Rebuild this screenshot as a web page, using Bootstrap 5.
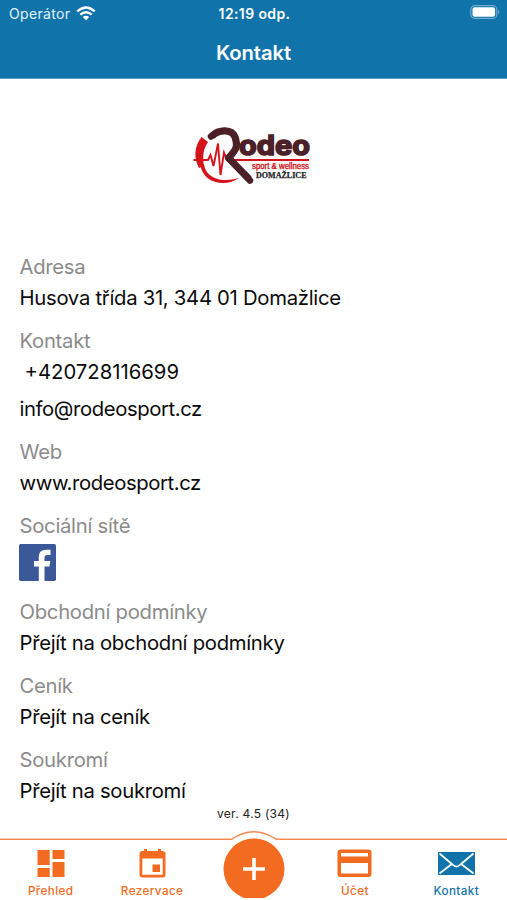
<!DOCTYPE html>
<html lang="cs">
<head>
<meta charset="utf-8">
<meta name="viewport" content="width=device-width, initial-scale=1">
<title>Kontakt</title>
<link href="https://cdn.jsdelivr.net/npm/bootstrap@5.3.0/dist/css/bootstrap.min.css" rel="stylesheet">
<style>
  :root { --blue: #1074ab; --orange: #f26b21; }
  body { font-family: Inter, "Noto Sans", sans-serif; color: #0b0b0b; background: #fff; }
  .screen { height: 900px; }
  .topbar { height: 79px; background: var(--blue); border-bottom: 1px solid #5ba0c7; }
  .status { height: 28px; padding: 0 7px 0 9px; font-size: 14px; line-height: 28px; }
  .status > div { flex: 1 1 0; }
  .carrier { color: #e3f0f8; letter-spacing: .35px; }
  .carrier svg { margin-left: 2px; margin-bottom: 2px; }
  .clock { font-weight: 600; letter-spacing: .38px; }
  .title { font-size: 20.3px; line-height: 50px; font-weight: 600; letter-spacing: -.12px; }
  .brand { height: 171.5px; padding-top: 45px; }
  .info { padding-left: 19.5px; font-size: 20.3px; line-height: 31px; letter-spacing: -.29px; }
  .info dt { font-weight: 400; color: #8b8b8b; }
  .info dd { margin: 0 0 12px; }
  .info dd.phone { margin-bottom: 6px; padding-left: 5px; letter-spacing: 0; }
  .info dd.mail { letter-spacing: -.4px; }
  .info dd.social { height: 43px; padding-top: 3px; line-height: 0; margin-left: -.5px; }
  .version { font-size: 12px; line-height: 16px; letter-spacing: .28px; height: 24px; margin-top: -11.5px; color: #222; }
  .tabs { height: 70px; }
  .tabs .ridge { left: 0; top: 0; }
  .tab { flex: 1 1 0; color: var(--orange); font-size: 11.7px; line-height: 14px; font-weight: 500; letter-spacing: .4px; padding-top: 15px; position: relative; }
  .tab svg { margin-bottom: 5px; }
  .tab.current { color: var(--blue); }
  .tab.plus { padding-top: 8px; }
</style>
</head>
<body>
<div class="screen d-flex flex-column overflow-hidden">
  <header class="topbar text-white flex-shrink-0">
    <div class="status d-flex">
      <div class="carrier d-flex align-items-center gap-1">Operátor
        <svg width="20" height="15" viewBox="0 0 20 15" fill="none" stroke="#fff" stroke-width="2.3"><path d="M1.2 5.4Q10-2.4 18.8 5.4M4.3 8.7Q10 3.7 15.7 8.7"/><path d="M6.8 11Q10 8.3 13.2 11L10 14.2Z" fill="#fff" stroke="none"/></svg>
      </div>
      <div class="clock text-center">12:19 odp.</div>
      <div class="d-flex align-items-center justify-content-end">
        <svg class="mb-1" width="30" height="14" viewBox="0 0 30 14"><rect x=".8" y=".7" width="26" height="12.6" rx="3.8" fill="none" stroke="#6eabd0" stroke-width="1.2"/><rect x="2.5" y="2.3" width="22.6" height="9.4" rx="2.2" fill="#fff"/><path d="M28.2 4.8q2.6 2.2 0 4.4z" fill="#6eabd0"/></svg>
      </div>
    </div>
    <h1 class="title text-center m-0">Kontakt</h1>
  </header>

  <main class="flex-grow-1">
    <div class="brand d-flex justify-content-center">
      <svg width="124" height="64" viewBox="0 0 124 64">
        <path d="M8 40C10 53 20 59 31 59Q40 59 47 54Q39 56.500 31 56C20 55 13 49 12 40Z" fill="#d6131b"/>
        <path d="M9.500 13L16 18C12 24 10 31 12 42L7 44C1 33 3 21 9.500 13Z" fill="#d6131b"/>
        <path d="M1.500 36H16L18.500 31L21.500 42L26 19.500L28.500 51L32 28.500L35 36H117" fill="none" stroke="#d6131b" stroke-width="1.900"/>
        <path d="M20 12C27 5 40 5 43 13C46 22 45 25 36.500 34L57 55" fill="none" stroke="#4b2027" stroke-width="7.200" stroke-linejoin="round"/>
        <path d="M19 12.500L20.500 11.500M53 51L58 56.500" stroke="#4b2027" stroke-width="6.500" stroke-linecap="round"/>
        <text x="47" y="30.500" textLength="71" lengthAdjust="spacingAndGlyphs" font-family="Inter, sans-serif" font-weight="700" font-size="26.500" fill="#4b2027" stroke="#4b2027" stroke-width="1.600">odeo</text>
        <text x="60" y="44.700" textLength="57" lengthAdjust="spacingAndGlyphs" font-family="Liberation Sans, sans-serif" font-size="8.500" fill="#d6131b" stroke="#d6131b" stroke-width=".35">sport &amp; wellness</text>
        <text x="64" y="53.500" textLength="50.500" lengthAdjust="spacingAndGlyphs" font-family="Liberation Serif, serif" font-weight="700" font-size="7.800" fill="#222" stroke="#222" stroke-width=".25">DOMAŽLICE</text>
      </svg>
    </div>

    <dl class="info mb-0">
      <dt>Adresa</dt>
      <dd>Husova třída 31, 344 01 Domažlice</dd>
      <dt>Kontakt</dt>
      <dd class="phone">+420728116699</dd>
      <dd class="mail">info@rodeosport.cz</dd>
      <dt>Web</dt>
      <dd class="mail">www.rodeosport.cz</dd>
      <dt>Sociální sítě</dt>
      <dd class="social"><svg width="37" height="37" viewBox="0 0 37 37"><rect width="37" height="37" rx="1.800" fill="#3b5998"/><path d="M19.800 37V22.500H15V17H19.800V13Q19.800 5.800 27 5.800H31.500V11H28.500Q25.500 11 25.500 14V17H31.300L30.500 22.500H25.500V37Z" fill="#fff"/></svg></dd>
      <dt>Obchodní podmínky</dt>
      <dd>Přejít na obchodní podmínky</dd>
      <dt>Ceník</dt>
      <dd>Přejít na ceník</dd>
      <dt>Soukromí</dt>
      <dd>Přejít na soukromí</dd>
    </dl>
    <div class="version text-center">ver. 4.5 (34)</div>
  </main>

  <nav class="tabs d-flex text-center position-relative flex-shrink-0">
    <svg class="ridge position-absolute" width="507" height="14" viewBox="0 0 507 14"><path d="M0 9.300H231.500Q253.500-6 276.500 9.300H507" fill="none" stroke="#f58a52" stroke-width="1.500"/></svg>
    <div class="tab d-flex flex-column align-items-center">
      <svg width="28" height="34" viewBox="0 0 28 34" fill="currentColor"><path d="M.5 5H12.700V20H.5ZM15.500 5H27.500V14H15.500ZM.5 23H12.700V32H.5ZM15.500 17H27.500V32H15.500Z"/></svg>
      Přehled
    </div>
    <div class="tab d-flex flex-column align-items-center">
      <svg width="27" height="34" viewBox="0 0 27 34"><path fill="currentColor" fill-rule="evenodd" d="M5 4H8V6H19V4H22V6H23.500Q26.500 6 26.500 9V29.500Q26.500 32.500 23.500 32.500H3.500Q.5 32.500 .5 29.500V9Q.5 6 3.500 6H5ZM3.300 13.500V29.800H23.700V13.500ZM13.500 19.500H21V27H13.500Z"/></svg>
      Rezervace
    </div>
    <div class="tab plus">
      <svg width="62" height="60" viewBox="0 0 62 60"><circle cx="31" cy="31" r="30.500" fill="currentColor"/><path d="M20 31H42M31 20V42" stroke="#fff" stroke-width="3.600"/></svg>
    </div>
    <div class="tab d-flex flex-column align-items-center">
      <svg width="35" height="34" viewBox="0 0 35 34"><path fill="currentColor" fill-rule="evenodd" d="M3.500 4.500H31.500Q34.500 4.500 34.500 7.500V29Q34.500 32 31.500 32H3.500Q.5 32 .5 29V7.500Q.5 4.500 3.500 4.500ZM4 8V11.500H31V8ZM4 18V28.500H31V18Z"/></svg>
      Účet
    </div>
    <div class="tab current d-flex flex-column align-items-center">
      <svg width="37" height="34" viewBox="0 0 37 34"><rect y="7" width="37" height="23" fill="currentColor"/><path d="M1.500 8.500L14.500 19.500Q18.500 23.500 22.500 19.500L35.500 8.500M1.500 28.500L14.500 18.500M35.500 28.500L22.500 18.500" fill="none" stroke="#fff" stroke-width="1.700"/></svg>
      Kontakt
    </div>
  </nav>
</div>
<script src="https://cdn.jsdelivr.net/npm/bootstrap@5.3.0/dist/js/bootstrap.bundle.min.js"></script>
</body>
</html>
